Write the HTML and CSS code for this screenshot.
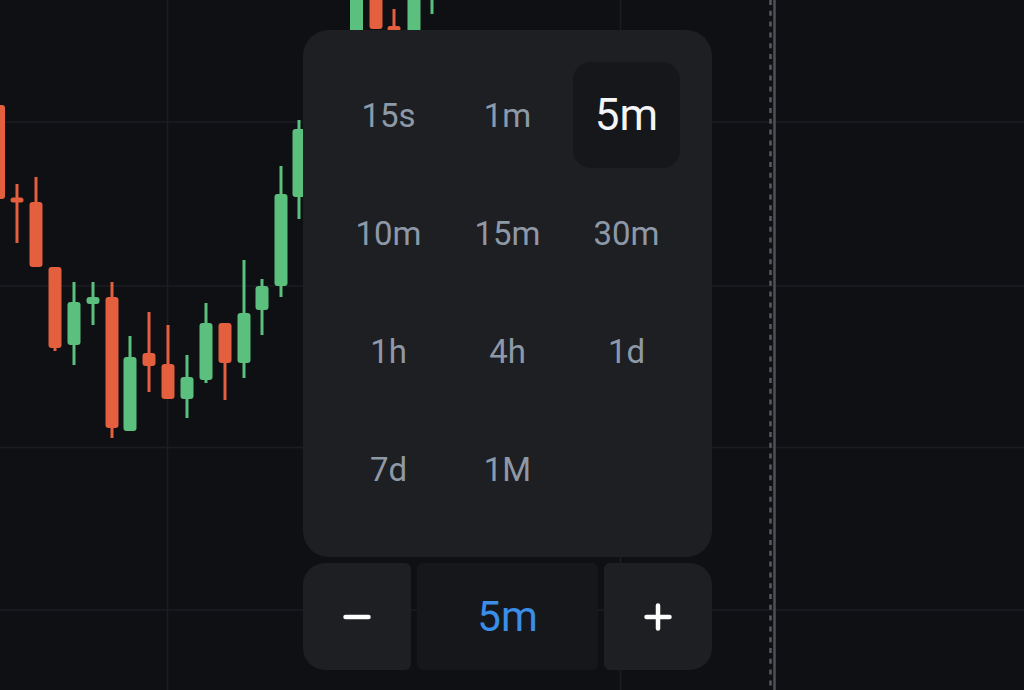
FILE: index.html
```html
<!DOCTYPE html>
<html lang="en">
<head>
<meta charset="utf-8">
<title>Interval picker</title>
<link rel="stylesheet" href="styles.css">
</head>
<body>
<div class="stage">
  <svg class="chart" width="1024" height="690" viewBox="0 0 1024 690" aria-hidden="true">
    <g class="grid-lines" stroke="#1c1d22" stroke-width="1.5">
      <line x1="0" y1="122" x2="1024" y2="122"/>
      <line x1="0" y1="286" x2="1024" y2="286"/>
      <line x1="0" y1="447.5" x2="1024" y2="447.5"/>
      <line x1="0" y1="610" x2="1024" y2="610"/>
      <line x1="167.5" y1="0" x2="167.5" y2="690"/>
      <line x1="620.5" y1="0" x2="620.5" y2="690"/>
    </g>
    <g class="now-line">
      <line x1="770.5" y1="0" x2="770.5" y2="690" stroke="#56585d" stroke-width="2.5" stroke-dasharray="5 5.8"/>
      <line x1="774.5" y1="0" x2="774.5" y2="690" stroke="#4e5055" stroke-width="2.5"/>
    </g>
    <g class="down" fill="#e35f3e">
      <rect x="-8" y="105" width="13" height="94" rx="3"/>
      <rect x="15.5" y="184" width="3" height="59"/>
      <rect x="10.5" y="197.5" width="13" height="5" rx="2.5"/>
      <rect x="34.5" y="177" width="3" height="30"/>
      <rect x="29.5" y="202" width="13" height="65" rx="3"/>
      <rect x="53.5" y="340" width="3" height="11"/>
      <rect x="48.5" y="267" width="13" height="81" rx="3"/>
      <rect x="110.5" y="282" width="3" height="156"/>
      <rect x="105.5" y="297" width="13" height="131" rx="3"/>
      <rect x="147.5" y="312" width="3" height="80"/>
      <rect x="142.5" y="353" width="13" height="13" rx="3"/>
      <rect x="166.5" y="325" width="3" height="74"/>
      <rect x="161.5" y="364" width="13" height="35" rx="3"/>
      <rect x="223.5" y="323" width="3" height="77"/>
      <rect x="218.5" y="323" width="13" height="40" rx="3"/>
      <rect x="369.5" y="-10" width="13" height="39" rx="3"/>
      <rect x="392.5" y="9" width="3" height="20"/>
      <rect x="387.5" y="26" width="13" height="5" rx="2.5"/>
    </g>
    <g class="up" fill="#5bbf7d">
      <rect x="72.5" y="282" width="3" height="83"/>
      <rect x="67.5" y="302" width="13" height="43" rx="3"/>
      <rect x="91.5" y="282" width="3" height="43"/>
      <rect x="86.5" y="297" width="13" height="7" rx="3"/>
      <rect x="128.5" y="336" width="3" height="30"/>
      <rect x="123.5" y="357" width="13" height="74" rx="3"/>
      <rect x="185.5" y="355" width="3" height="63"/>
      <rect x="180.5" y="377" width="13" height="22" rx="3"/>
      <rect x="204.5" y="303" width="3" height="80"/>
      <rect x="199.5" y="323" width="13" height="57" rx="3"/>
      <rect x="242.5" y="260" width="3" height="118"/>
      <rect x="237.5" y="313" width="13" height="50" rx="3"/>
      <rect x="260.5" y="279" width="3" height="56"/>
      <rect x="255.5" y="286" width="13" height="24" rx="3"/>
      <rect x="279.5" y="166" width="3" height="131"/>
      <rect x="274.5" y="194" width="13" height="92" rx="3"/>
      <rect x="297.5" y="120" width="3" height="99"/>
      <rect x="292.5" y="129" width="13" height="68" rx="3"/>
      <rect x="350" y="-10" width="13" height="50" rx="3"/>
      <rect x="407.5" y="-10" width="13" height="50" rx="3"/>
      <rect x="430.5" y="-5" width="3" height="19"/>
    </g>
  </svg>

  <div class="picker">
    <div class="panel">
      <button class="cell">15s</button>
      <button class="cell">1m</button>
      <button class="cell cell--active">5m</button>
      <button class="cell">10m</button>
      <button class="cell">15m</button>
      <button class="cell">30m</button>
      <button class="cell">1h</button>
      <button class="cell">4h</button>
      <button class="cell">1d</button>
      <button class="cell">7d</button>
      <button class="cell">1M</button>
    </div>
    <div class="stepper">
      <button class="step step--minus" aria-label="Decrease">
        <svg width="28" height="28" viewBox="0 0 28 28"><line x1="2.5" y1="14" x2="25.5" y2="14" stroke="#fff" stroke-width="4.5" stroke-linecap="round"/></svg>
      </button>
      <div class="current">5m</div>
      <button class="step step--plus" aria-label="Increase">
        <svg width="28" height="28" viewBox="0 0 28 28"><line x1="2.5" y1="14" x2="25.5" y2="14" stroke="#fff" stroke-width="4.5" stroke-linecap="round"/><line x1="14" y1="2.5" x2="14" y2="25.5" stroke="#fff" stroke-width="4.5" stroke-linecap="round"/></svg>
      </button>
    </div>
  </div>
</div>
</body>
</html>
```

FILE: styles.css
```css
* {
  box-sizing: border-box;
}

html,
body {
  margin: 0;
  padding: 0;
  background: #0f1014;
}

body {
  width: 1024px;
  height: 690px;
  overflow: hidden;
  font-family: Roboto, "Noto Sans", "Liberation Sans", sans-serif;
}

.stage {
  position: relative;
  width: 1024px;
  height: 690px;
}

.chart {
  position: absolute;
  left: 0;
  top: 0;
  display: block;
}

.picker {
  position: absolute;
  left: 303px;
  top: 30px;
  width: 409px;
  display: flex;
  flex-direction: column;
  gap: 6px;
}

.panel {
  height: 527px;
  background: #1e1f23;
  border-radius: 26px;
  padding: 32px 32px 34px;
  display: grid;
  grid-template-columns: repeat(3, 1fr);
  grid-template-rows: repeat(4, 1fr);
  column-gap: 12px;
  row-gap: 12px;
}

.cell {
  border: 0;
  margin: 0;
  padding: 0;
  background: transparent;
  font-family: inherit;
  font-size: 33px;
  font-weight: 400;
  color: #8e99a8;
  border-radius: 18px;
  display: flex;
  align-items: center;
  justify-content: center;
  line-height: 1;
}

.cell--active {
  background: #16171b;
  color: #f4f5f7;
  font-size: 44px;
}

.stepper {
  height: 107px;
  display: grid;
  grid-template-columns: 108px 1fr 108px;
  gap: 6px;
}

.step {
  border: 0;
  margin: 0;
  padding: 0;
  background: #1e1f23;
  display: flex;
  align-items: center;
  justify-content: center;
}

.step svg {
  display: block;
}

.step--minus {
  border-radius: 22px 6px 6px 22px;
}

.step--plus {
  border-radius: 6px 22px 22px 6px;
}

.current {
  background: #16171b;
  border-radius: 6px;
  display: flex;
  align-items: center;
  justify-content: center;
  font-size: 42px;
  color: #3a8ee8;
  line-height: 1;
}
```
